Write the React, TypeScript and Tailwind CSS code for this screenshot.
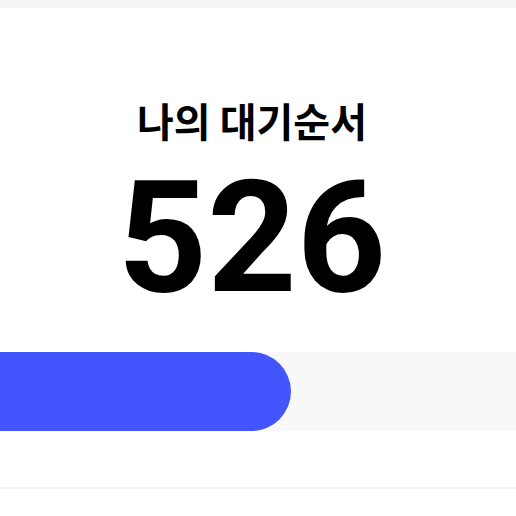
export default function App() {
  return (
    <div className="w-[516px] h-[516px] bg-white overflow-hidden flex flex-col">
      <div className="h-[8px] bg-[#f5f5f5] shrink-0" />
      <div className="flex flex-col items-center pt-[84px] pr-[12px]">
        <div
          className="text-[40px] leading-[56px] font-bold text-black"
          style={{ fontFamily: '"Noto Sans CJK KR", sans-serif' }}
        >
          나의 대기순서
        </div>
        <div
          className="text-[156px] leading-[180px] font-bold text-black"
          style={{ fontFamily: 'Roboto, "Noto Sans CJK KR", sans-serif' }}
        >
          526
        </div>
      </div>
      <div className="mt-[24px] h-[79px] bg-[#f8f8f9] w-full shrink-0">
        <div className="h-full w-[291px] bg-[#4355ff] rounded-r-full" />
      </div>
      <div className="mt-[56px] h-[2px] bg-[#f0f0f0] shrink-0" />
    </div>
  );
}
